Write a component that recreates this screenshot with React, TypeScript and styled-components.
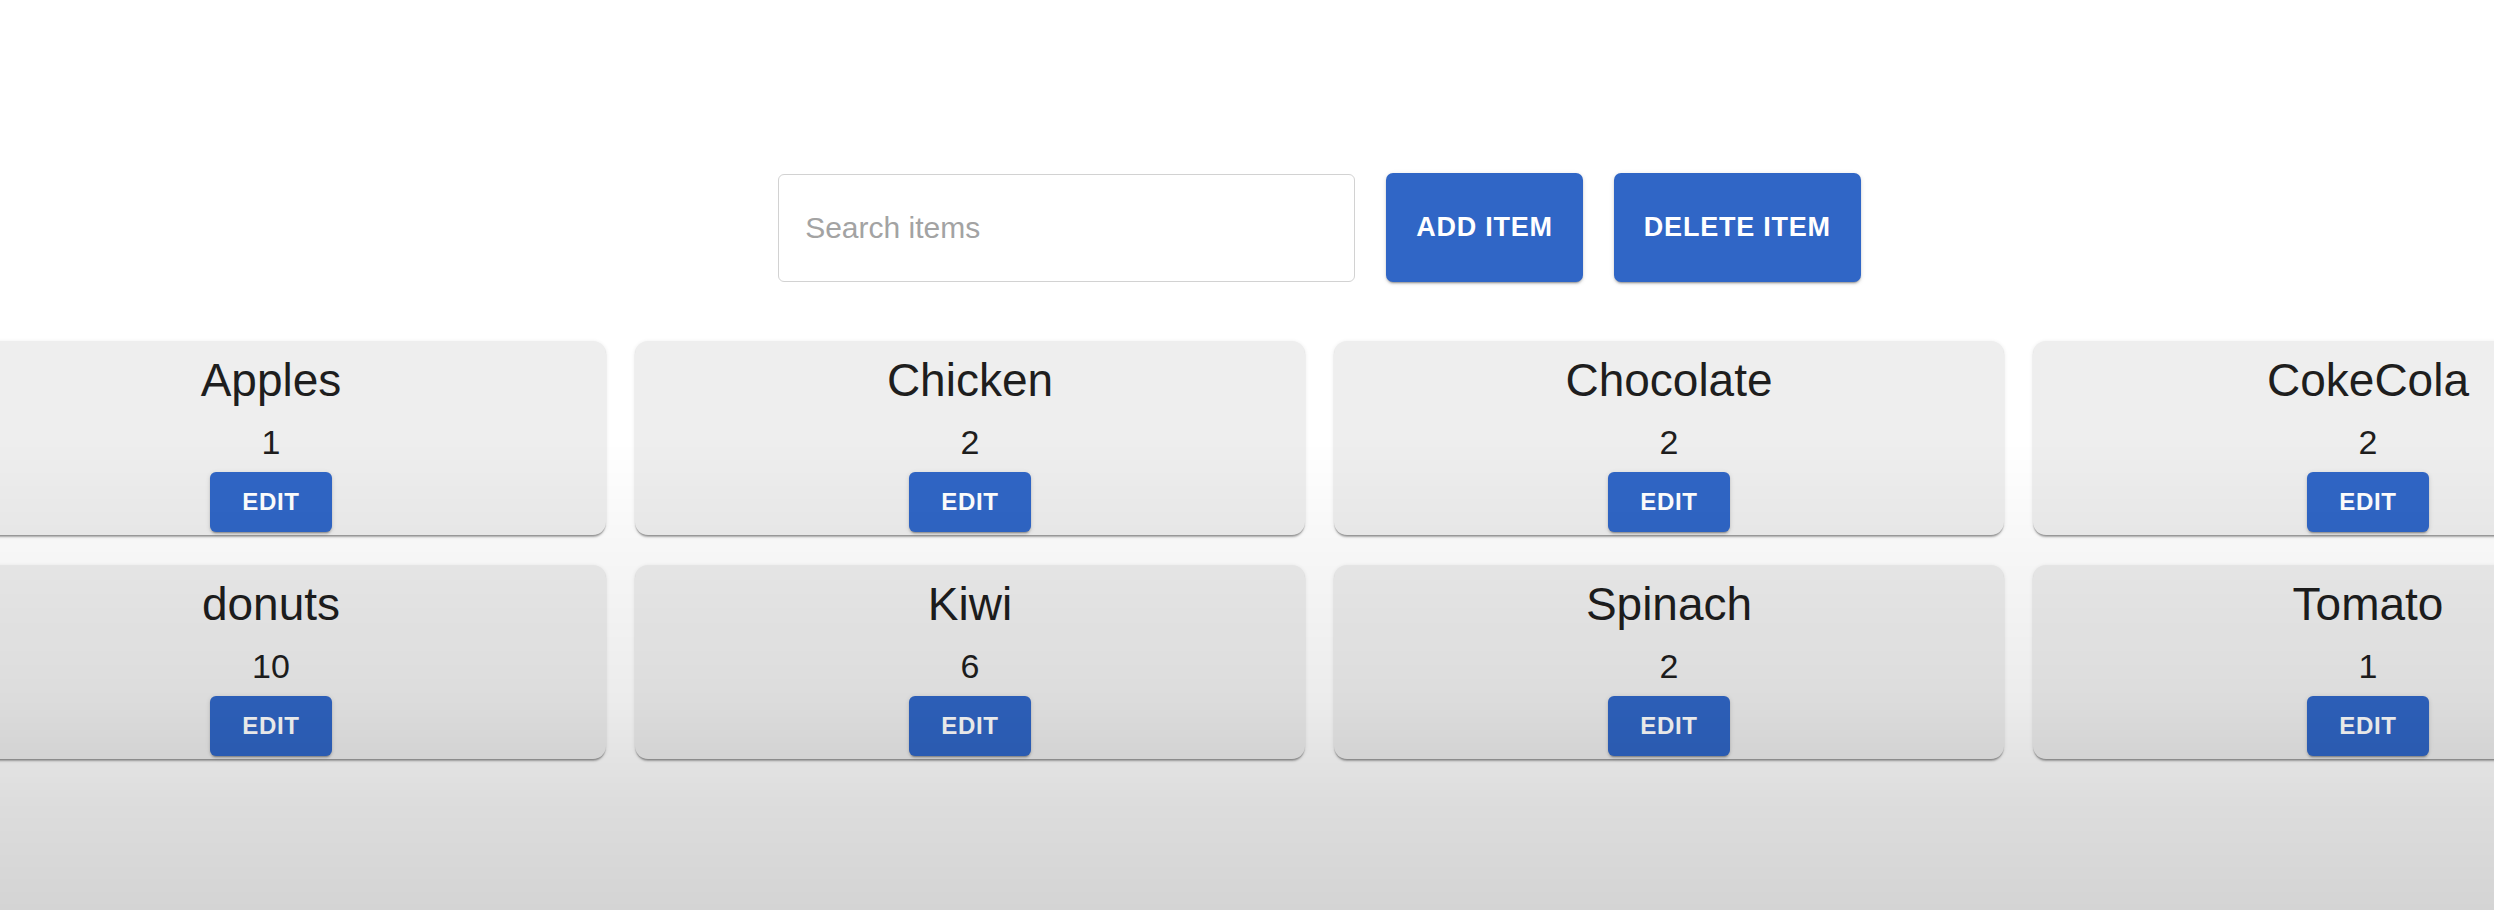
import React from "react";
import styled, { createGlobalStyle } from "styled-components";

const GlobalStyle = createGlobalStyle`
  html, body {
    margin: 0;
    padding: 0;
    background: #ffffff;
    overflow: hidden;
    font-family: "Liberation Sans", Arial, Helvetica, sans-serif;
  }
  body::after {
    content: "";
    position: fixed;
    left: 0;
    top: 0;
    width: 100vw;
    height: 910px;
    pointer-events: none;
    background: linear-gradient(
      to bottom,
      rgba(0, 0, 0, 0) 0px,
      rgba(0, 0, 0, 0) 440px,
      rgba(0, 0, 0, 0.03) 545px,
      rgba(0, 0, 0, 0.075) 700px,
      rgba(0, 0, 0, 0.135) 800px,
      rgba(0, 0, 0, 0.17) 910px
    );
  }
`;

const Page = styled.div`
  width: 2494px;
  height: 910px;
  overflow: hidden;
`;

const Main = styled.main`
  width: 2767px;
  margin-left: -64px;
  padding-top: 173px;
  display: flex;
  flex-direction: column;
  align-items: center;
  gap: 59px;
`;

const Toolbar = styled.div`
  display: flex;
  align-items: center;
  gap: 31px;
`;

const SearchInput = styled.input`
  box-sizing: border-box;
  width: 577px;
  height: 108px;
  border: 1.5px solid #d2d2d2;
  border-radius: 6px;
  padding: 0 26px;
  font-family: "Liberation Sans", Arial, sans-serif;
  font-size: 30px;
  color: #222;
  background: #fff;
  outline: none;
  &::placeholder {
    color: #a3a3a3;
  }
`;

const Button = styled.button<{ $size?: "large" | "small" }>`
  box-sizing: border-box;
  border: none;
  border-radius: ${(p) => (p.$size === "small" ? "6px" : "7px")};
  background: #3066c6;
  color: #ffffff;
  font-family: "Liberation Sans", Arial, sans-serif;
  font-weight: 700;
  text-transform: uppercase;
  letter-spacing: 0.02857em;
  cursor: pointer;
  box-shadow: 0 3px 1px -2px rgba(0, 0, 0, 0.2), 0 2px 2px 0 rgba(0, 0, 0, 0.14),
    0 1px 5px 0 rgba(0, 0, 0, 0.12);
  font-size: ${(p) => (p.$size === "small" ? "24px" : "27px")};
  height: ${(p) => (p.$size === "small" ? "60px" : "109px")};
  padding: ${(p) => (p.$size === "small" ? "0 32px" : "0 30px")};
  flex-shrink: 0;
`;

const Grid = styled.section`
  display: grid;
  grid-template-columns: repeat(4, 670px);
  column-gap: 29px;
  row-gap: 30px;
`;

const Card = styled.article`
  box-sizing: border-box;
  height: 194px;
  background: #eeeeee;
  border-radius: 13px;
  box-shadow: 0 3px 2px -1px rgba(0, 0, 0, 0.28), 0 1px 1px 0 rgba(0, 0, 0, 0.12),
    0 1px 4px 0 rgba(0, 0, 0, 0.1);
  display: flex;
  flex-direction: column;
  align-items: center;
  padding-top: 12px;
`;

const Title = styled.h2`
  margin: 0;
  font-weight: 400;
  font-size: 46px;
  line-height: 55px;
  color: #1e1e1e;
`;

const Quantity = styled.div`
  margin-top: 14px;
  font-size: 34px;
  line-height: 41px;
  color: #1e1e1e;
  margin-bottom: 9px;
`;

const items = [
  { name: "Apples", qty: 1 },
  { name: "Chicken", qty: 2 },
  { name: "Chocolate", qty: 2 },
  { name: "CokeCola", qty: 2 },
  { name: "donuts", qty: 10 },
  { name: "Kiwi", qty: 6 },
  { name: "Spinach", qty: 2 },
  { name: "Tomato", qty: 1 },
];

export default function App() {
  return (
    <Page>
      <GlobalStyle />
      <Main>
        <Toolbar>
          <SearchInput placeholder="Search items" />
          <Button $size="large">Add Item</Button>
          <Button $size="large">Delete Item</Button>
        </Toolbar>
        <Grid>
          {items.map((it) => (
            <Card key={it.name}>
              <Title>{it.name}</Title>
              <Quantity>{it.qty}</Quantity>
              <Button $size="small">Edit</Button>
            </Card>
          ))}
        </Grid>
      </Main>
    </Page>
  );
}
